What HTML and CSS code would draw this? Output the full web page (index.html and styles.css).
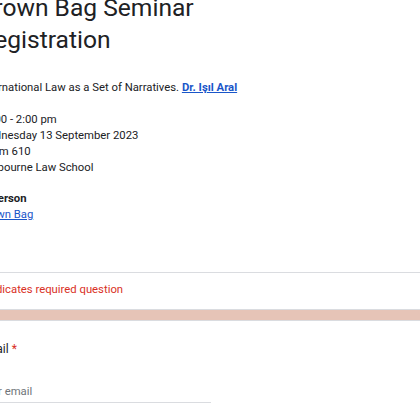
FILE: index.html
```html
<!DOCTYPE html>
<html lang="en">
<head>
    <meta charset="UTF-8">
    <title>Brown Bag Seminar Registration</title>
    <link rel="stylesheet" href="styles.css">
</head>
<body>

    <div class="page">
        <div class="card header-card">
            <h1 class="title">Brown Bag Seminar Registration</h1>
            <div class="description">
                <p>International Law as a Set of Narratives. <a class="speaker" href="#">Dr. Işıl Aral</a></p>
                <p>&nbsp;</p>
                <p>12:00 - 2:00 pm</p>
                <p>Wednesday 13 September 2023</p>
                <p>Room 610</p>
                <p>Melbourne Law School</p>
                <p>&nbsp;</p>
                <p><b>In person</b></p>
                <p><a href="#">Brown Bag</a></p>
            </div>
            <div class="required-note">* Indicates required question</div>
        </div>

        <div class="card question-card">
            <div class="question-label">Email <span class="star">*</span></div>
            <div class="answer">Your email</div>
        </div>
    </div>

</body>
</html>
```

FILE: styles.css
```css
body {
    margin: 0;
    background-color: #e6c4b7;
    font-family: Roboto, "Liberation Sans", sans-serif;
    color: #202124;
    overflow: hidden;
}
.page {
    width: 520px;
    margin: -8px 0 0 -46px;
}
.card {
    background-color: #fff;
    border: 1px solid #dadce0;
    padding-left: 24px;
}
.header-card {
    border-top: none;
}
.title {
    margin: 0;
    font-size: 24.6px;
    line-height: 32px;
    font-weight: 400;
    width: 240px;
}
.description {
    margin-top: 24px;
    padding-bottom: 49px;
    font-size: 11.3px;
    line-height: 15.9px;
}
.description p {
    margin: 0;
}
.description a {
    color: #1a56c9;
}
.description .speaker {
    font-weight: bold;
}
.required-note {
    margin-left: -24px;
    padding: 9px 0 11px 24px;
    border-top: 1px solid #dadce0;
    color: #d93025;
    font-size: 11.3px;
    line-height: 16px;
}
.question-card {
    margin-top: 10px;
    padding-top: 20px;
    height: 120px;
}
.question-label {
    font-size: 12px;
    line-height: 16px;
}
.star {
    color: #d93025;
}
.answer {
    margin-top: 27px;
    width: 232px;
    padding-bottom: 2px;
    border-bottom: 1px solid #dadce0;
    color: #70757a;
    font-size: 11.3px;
    line-height: 16px;
}
```
